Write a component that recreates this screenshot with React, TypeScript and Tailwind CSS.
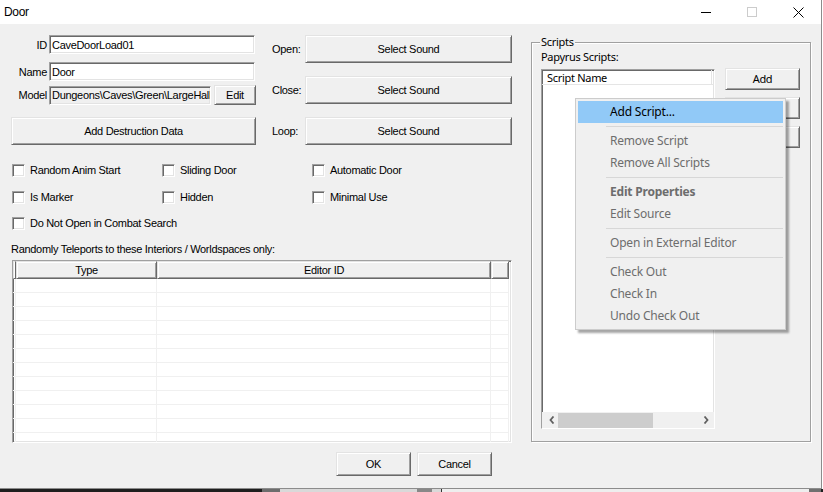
import React from "react";

const MS = "font-['Liberation_Sans',Arial,sans-serif] text-[11px] tracking-[-0.3px] text-black leading-[14px]";
const SEG = "font-['Noto_Sans','Open_Sans',sans-serif] text-[11px] tracking-[-0.3px] text-black leading-[14px]";
const RAISED =
  "bg-[#f0f0f0] border border-t-[#e3e3e3] border-l-[#e3e3e3] border-r-[#696969] border-b-[#696969] shadow-[inset_1px_1px_0_#ffffff,inset_-1px_-1px_0_#a0a0a0]";
const SUNKEN =
  "border border-t-[#a0a0a0] border-l-[#a0a0a0] border-r-white border-b-white shadow-[inset_1px_1px_0_#696969,inset_-1px_-1px_0_#e3e3e3]";

function TitleBar() {
  return (
    <div className="flex h-[24px] items-center justify-between bg-white">
      <span className="pl-[4px] font-['Liberation_Sans',Arial,sans-serif] text-[12px] tracking-[-0.3px] text-black">Door</span>
      <div className="flex h-full">
        <div className="flex h-full w-[46px] items-center justify-center">
          <div className="h-px w-[10px] bg-black" />
        </div>
        <div className="flex h-full w-[46px] items-center justify-center">
          <div className="h-[10px] w-[10px] border border-[#cccccc]" />
        </div>
        <div className="flex h-full w-[46px] items-center justify-center">
          <svg width="11" height="11" viewBox="0 0 11 11">
            <path d="M0.5 0.5 L10.5 10.5 M10.5 0.5 L0.5 10.5" stroke="#000" strokeWidth="1" />
          </svg>
        </div>
      </div>
    </div>
  );
}

function Btn({ label, className }: { label: string; className: string }) {
  return <div className={`flex items-center justify-center ${RAISED} ${MS} ${className}`}>{label}</div>;
}

function Check({ label }: { label: string }) {
  return (
    <div className="flex h-[16px] items-center gap-[5px]">
      <div className={`h-[13px] w-[13px] shrink-0 bg-white ${SUNKEN}`} />
      <span className={`${MS} whitespace-nowrap`}>{label}</span>
    </div>
  );
}

function TextBox({ value, className, gray }: { value: string; className: string; gray?: boolean }) {
  return (
    <div
      className={`flex items-center overflow-hidden whitespace-nowrap pl-[2px] ${gray ? "bg-[#f0f0f0]" : "bg-white"} ${SUNKEN} ${className}`}
    >
      <span className={MS}>{value}</span>
    </div>
  );
}

function TeleportTable() {
  const rows = Array.from({ length: 12 });
  return (
    <div className={`ml-[1px] mt-[4px] h-[183px] w-[500px] overflow-hidden bg-white ${SUNKEN}`}>
      <div className="grid h-[18px] grid-cols-[3px_141px_334px_18px]">
        <div className={RAISED} />
        <div className={`flex items-center justify-center ${RAISED} ${MS}`}>Type</div>
        <div className={`flex items-center justify-center ${RAISED} ${MS}`}>Editor ID</div>
        <div className={RAISED} />
      </div>
      {rows.map((_, i) => (
        <div key={i} className="grid h-[14px] grid-cols-[3px_141px_334px_18px]">
          <div className="border-b border-r border-[#f0f0f0]" />
          <div className="border-b border-r border-[#f0f0f0]" />
          <div className="border-b border-r border-[#f0f0f0]" />
          <div className="border-b border-r border-[#f0f0f0]" />
        </div>
      ))}
    </div>
  );
}

function LeftPart() {
  return (
    <div className="flex w-[520px] flex-col pl-[11px] pt-[11px]">
      <div className="flex">
        <div className="flex w-[245px] flex-col">
          <div className="flex h-[19px] items-center">
            <span className={`w-[36px] text-right ${MS}`}>ID</span>
            <TextBox value="CaveDoorLoad01" className="ml-[2px] h-[19px] w-[206px]" />
          </div>
          <div className="mt-[8px] flex h-[19px] items-center">
            <span className={`w-[36px] text-right ${MS}`}>Name</span>
            <TextBox value="Door" className="ml-[2px] h-[19px] w-[206px]" />
          </div>
          <div className="mt-[4px] flex h-[20px] items-center">
            <span className={`w-[36px] text-right ${MS}`}>Model</span>
            <TextBox value="Dungeons\Caves\Green\LargeHallDoor01.nif" gray className="ml-[2px] h-[19px] w-[162px]" />
            <Btn label="Edit" className="ml-[3px] h-[20px] w-[42px]" />
          </div>
          <Btn label="Add Destruction Data" className="mt-[12px] h-[28px] w-[245px]" />
        </div>
        <div className="ml-[16px] flex flex-col gap-[13px]">
          {["Open:", "Close:", "Loop:"].map((l) => (
            <div key={l} className="flex h-[28px] items-center">
              <span className={`w-[33px] ${MS}`}>{l}</span>
              <Btn label="Select Sound" className="h-[28px] w-[207px]" />
            </div>
          ))}
        </div>
      </div>

      <div className="ml-[1px] mt-[17px] grid grid-cols-[150px_150px_150px]">
        <Check label="Random Anim Start" />
        <Check label="Sliding Door" />
        <Check label="Automatic Door" />
      </div>
      <div className="ml-[1px] mt-[11px] grid grid-cols-[150px_150px_150px]">
        <Check label="Is Marker" />
        <Check label="Hidden" />
        <Check label="Minimal Use" />
      </div>
      <div className="ml-[1px] mt-[10px]">
        <Check label="Do Not Open in Combat Search" />
      </div>
      <div className={`mt-[11px] ${MS}`}>Randomly Teleports to these Interiors / Worldspaces only:</div>
      <TeleportTable />
    </div>
  );
}

function ScriptList() {
  return (
    <div className={`relative flex h-[360px] w-[174px] flex-col bg-white ${SUNKEN}`}>
      <div className="flex h-[15px] shrink-0 border-b border-[#e5e5e5]">
        <div className={`w-[170px] border-r border-[#e5e5e5] pl-[5px] ${SEG} leading-[16px]`}>Script Name</div>
      </div>
      <div className="flex-1" />
      <div className="flex h-[16px] shrink-0 items-center bg-[#f0f0f0]">
        <div className="flex h-full w-[16px] items-center justify-center pl-[3px]">
          <svg width="6" height="8" viewBox="0 0 6 8">
            <path d="M4.5 0.5 L1.5 4 L4.5 7.5" fill="none" stroke="#606060" strokeWidth="1.8" />
          </svg>
        </div>
        <div className="h-[15px] w-[95px] bg-[#cdcdcd]" />
        <div className="flex-1" />
        <div className="flex h-full w-[16px] items-center justify-center">
          <svg width="6" height="8" viewBox="0 0 6 8">
            <path d="M1.5 0.5 L4.5 4 L1.5 7.5" fill="none" stroke="#606060" strokeWidth="1.8" />
          </svg>
        </div>
      </div>
    </div>
  );
}

function ScriptsGroup() {
  return (
    <div className="relative ml-[11px] mt-[18px] h-[400px] w-[280px] border border-[#a0a0a0] shadow-[1px_1px_0_#ffffff,inset_1px_1px_0_#ffffff]">
      <span className={`absolute -top-[8px] left-[8px] bg-[#f0f0f0] px-[1px] ${SEG}`}>Scripts</span>
      <div className="pl-[9px] pt-[7px]">
        <div className={SEG}>Papyrus Scripts:</div>
        <div className="mt-[5px] flex">
          <ScriptList />
          <div className="-mt-[1px] ml-[10px] flex flex-col gap-[7px]">
            <div className={`flex h-[22px] w-[75px] items-center justify-center ${RAISED} ${SEG}`}>Add</div>
            <div className={`h-[22px] w-[75px] ${RAISED}`} />
            <div className={`h-[22px] w-[75px] ${RAISED}`} />
          </div>
        </div>
      </div>
    </div>
  );
}

type MI = { t?: string; sep?: boolean; hl?: boolean; bold?: boolean };
const MENU: MI[] = [
  { t: "Add Script...", hl: true },
  { sep: true },
  { t: "Remove Script" },
  { t: "Remove All Scripts" },
  { sep: true },
  { t: "Edit Properties", bold: true },
  { t: "Edit Source" },
  { sep: true },
  { t: "Open in External Editor" },
  { sep: true },
  { t: "Check Out" },
  { t: "Check In" },
  { t: "Undo Check Out" },
];

function ContextMenu() {
  return (
    <div className="absolute left-[575px] top-[98px] w-[211px] border border-[#cccccc] bg-[#f0f0f0] p-[2px] shadow-[3px_3px_2px_rgba(0,0,0,0.35)]">
      {MENU.map((m, i) =>
        m.sep ? (
          <div key={i} className="flex h-[7px] items-center pl-[28px]">
            <div className="h-px w-full bg-[#d7d7d7]" />
          </div>
        ) : (
          <div
            key={i}
            className={`flex h-[22px] items-center pl-[32px] font-['Noto_Sans','Open_Sans',sans-serif] text-[12px] tracking-[-0.2px] ${
              m.hl ? "bg-[#91c9f7] text-black" : "text-[#6d6d6d]"
            } ${m.bold ? "font-bold" : ""}`}
          >
            {m.t}
          </div>
        )
      )}
    </div>
  );
}

function BottomStrip() {
  return (
    <div className="flex h-[3px] w-[823px]">
      <div className="w-[262px] bg-[#1e1e1e]" />
      <div className="w-[18px] bg-[#6d6d6d]" />
      <div className="w-[137px] bg-[#d9d9d9]" />
      <div className="w-[15px] bg-[#888888]" />
      <div className="w-[9px] bg-[#d9d9d9]" />
      <div className="w-[1px] bg-[#333333]" />
      <div className="w-[367px] bg-[#eeeeee]" />
      <div className="w-[12px] bg-[#707070]" />
      <div className="flex-1 bg-[#1e1e1e]" />
    </div>
  );
}

export default function App() {
  return (
    <div className="relative h-[492px] w-[823px] overflow-hidden bg-white">
      <div className="flex h-[489px] w-[822px] flex-col border-b border-r border-[#8c8c8c] bg-[#f0f0f0]">
        <TitleBar />
        <div className="relative flex-1">
          <div className="flex">
            <LeftPart />
            <ScriptsGroup />
          </div>
          <div className="mt-[9px] flex gap-[6px] pl-[336px]">
            <Btn label="OK" className="h-[24px] w-[75px]" />
            <Btn label="Cancel" className="h-[24px] w-[75px]" />
          </div>
        </div>
      </div>
      <BottomStrip />
      <ContextMenu />
    </div>
  );
}
